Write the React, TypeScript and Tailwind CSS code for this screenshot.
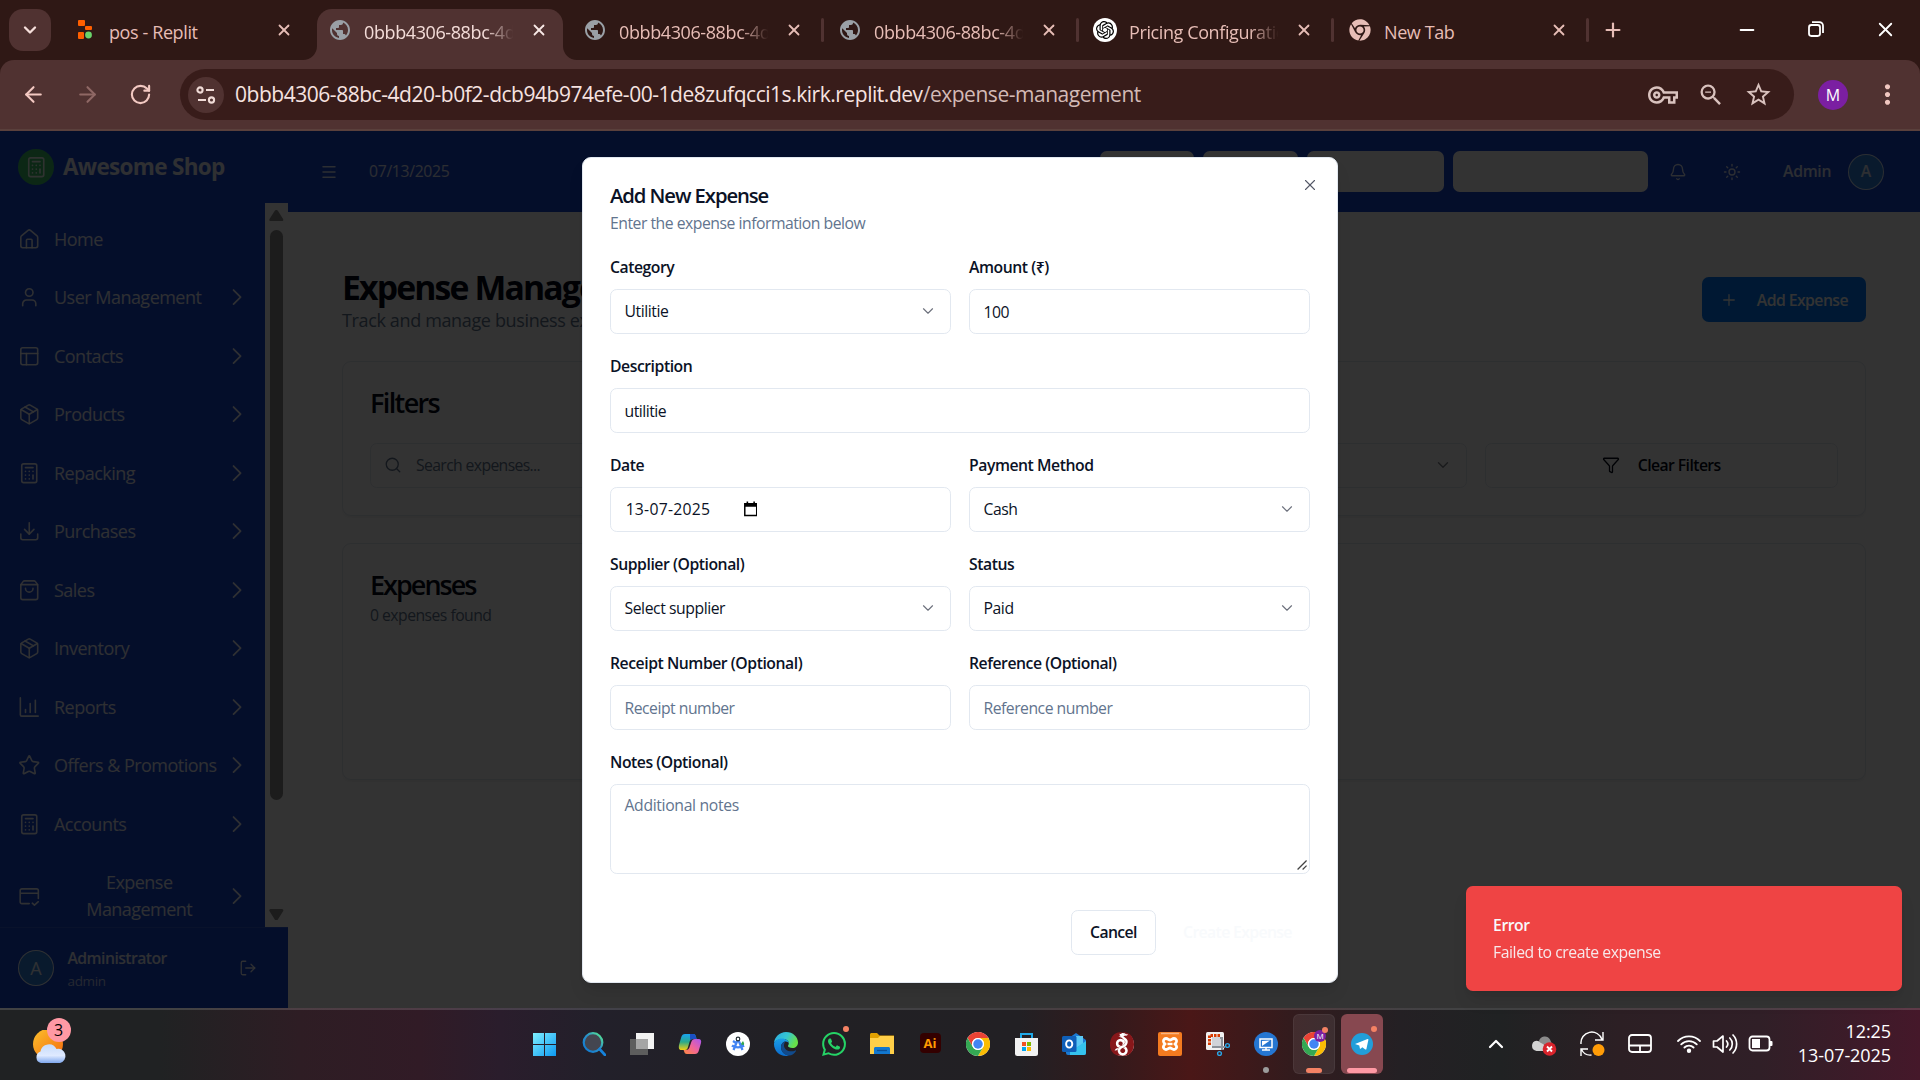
import type { ReactNode } from "react";
import {
  ArrowLeft, ArrowRight, Bell, Calculator, ChevronDown, ChevronRight, ChevronUp,
  Download, Filter, House, LogOut, Menu, Minus, Package, Plus, PanelsTopLeft, RotateCw,
  Search, ShoppingBag, Star, Sun, User, X,
} from "lucide-react";
import { MdMoreVert, MdOutlineVpnKey, MdPublic, MdStarBorder, MdZoomOut } from "react-icons/md";
import { FaChrome } from "react-icons/fa";
import { SiOpenai, SiWhatsapp, SiWireguard } from "react-icons/si";

/* ---------- Browser chrome ---------- */

function ReplitIcon() {
  return (
    <svg width="16" height="20" viewBox="0 0 16 20">
      <rect x="1" y="0" width="7" height="6" rx="1" fill="#ff5f00" />
      <rect x="8" y="6" width="7" height="4" rx="1" fill="#ff5f00" />
      <rect x="1" y="12" width="6" height="7" rx="1" fill="#ff5f00" />
      <circle cx="11.5" cy="15" r="3.4" fill="#6bd46b" />
    </svg>
  );
}

type TabProps = { icon: ReactNode; title: string; active?: boolean; fade?: boolean; line?: boolean };

function Tab({ icon, title, active, fade, line }: TabProps) {
  return (
    <div className={active ? "relative mr-[9px] flex h-[51px] w-[246px] shrink-0 items-center rounded-t-[15px] bg-[#503231] pb-[9px]" : "relative flex h-[51px] w-[255px] shrink-0 items-center pb-[9px]"}>
      {active && (
        <>
          <svg className="absolute bottom-0 -left-[14px]" width="14" height="14"><path d="M14 0V14H0A14 14 0 0 0 14 0Z" fill="#503231" /></svg>
          <svg className="absolute -right-[14px] bottom-0" width="14" height="14"><path d="M0 0V14H14A14 14 0 0 1 0 0Z" fill="#503231" /></svg>
        </>
      )}
      <span className="ml-[11px] flex w-6 justify-center">{icon}</span>
      <span
        className={
          (active ? "text-[#f3dcd8] " : "text-[#e7bdb6] ") +
          (fade ? "[mask-image:linear-gradient(to_right,black_80%,transparent_99%)] " : "") +
          "ml-3 w-[151px] overflow-hidden pt-[3px] text-[18px] leading-6 tracking-[-0.022em] whitespace-nowrap"
        }
      >
        {title}
      </span>
      <X className={active ? "ml-[15px] text-[#f8e9e6]" : "ml-[15px] text-[#e7bdb6]"} size={18} strokeWidth={2.4} />
      {line && <span className="absolute top-[9px] right-[3px] h-6 w-[3px] rounded bg-[#503231]" />}
    </div>
  );
}

function BrowserBar() {
  const globe = <MdPublic size={26} className="text-[#9aa0a6]" />;
  return (
    <header className="flex h-[131px] shrink-0 flex-col bg-[#2f1815]">
      <div className="flex h-[60px] items-end">
        <div className="mr-[11px] mb-[9px] ml-[9px] flex size-[42px] shrink-0 items-center justify-center rounded-[14px] bg-[#503231]">
          <ChevronDown size={20} strokeWidth={2.8} className="text-[#f6dfdb]" />
        </div>
        <Tab icon={<ReplitIcon />} title="pos - Replit" />
        <Tab icon={globe} title="0bbb4306-88bc-4d20" active fade />
        <Tab icon={globe} title="0bbb4306-88bc-4d20" fade line />
        <Tab icon={globe} title="0bbb4306-88bc-4d20" fade line />
        <Tab
          icon={<span className="flex size-6 items-center justify-center rounded-full bg-white text-black"><SiOpenai size={18} /></span>}
          title="Pricing Configuration" fade line
        />
        <Tab icon={<FaChrome size={22} className="text-[#e7bdb6]" />} title="New Tab" line />
        <Plus size={22} strokeWidth={2.4} className="mb-[19px] ml-[10px] text-[#e7bdb6]" />
        <div className="mr-[23px] mb-[19px] ml-auto flex items-center gap-[47px] text-white">
          <Minus size={22} strokeWidth={2} />
          <svg width="22" height="22" viewBox="0 0 22 22" fill="none" stroke="currentColor" strokeWidth="1.8">
            <rect x="4" y="6" width="11" height="11" rx="2.4" />
            <path d="M7 3.2h7.5a3.5 3.5 0 0 1 3.5 3.5V14" />
          </svg>
          <X size={23} strokeWidth={1.9} />
        </div>
      </div>
      <div className="flex h-[71px] items-center rounded-t-[14px] border-b-2 border-[#5a403c] bg-[#503231]">
        <div className="ml-[21px] flex items-center gap-[29px] text-[#f3c9c2]">
          <ArrowLeft size={25} strokeWidth={2} />
          <ArrowRight size={25} strokeWidth={2} className="text-[#8f6865]" />
          <RotateCw size={23} strokeWidth={2.2} />
        </div>
        <div className="ml-[28px] flex h-[51px] w-[1614px] items-center rounded-full bg-[#381c1a]">
          <span className="ml-2 flex size-9 items-center justify-center rounded-full bg-[#503231]">
            <svg width="20" height="20" viewBox="0 0 20 20" fill="none" stroke="#f0dbd7" strokeWidth="2.1">
              <circle cx="4" cy="5" r="2.6" /><path d="M10 5h8M2 15h8" /><circle cx="15.5" cy="15" r="2.6" />
            </svg>
          </span>
          <p className="ml-[11px] pt-px text-[21px] tracking-[-0.0222em] whitespace-nowrap text-[#f6e3e0]">
            0bbb4306-88bc-4d20-b0f2-dcb94b974efe-00-1de8zufqcci1s.kirk.replit.dev
            <span className="text-[#d3bab6]">/expense-management</span>
          </p>
          <div className="mr-[21px] ml-auto flex items-center gap-[19px] text-[#d9c2be]">
            <MdOutlineVpnKey size={30} />
            <MdZoomOut size={28} />
            <MdStarBorder size={29} />
          </div>
        </div>
        <span className="ml-6 flex size-[30px] items-center justify-center rounded-full bg-[#7b1fa2] text-base text-white">M</span>
        <MdMoreVert size={31} className="ml-6 text-[#f0c7c0]" />
      </div>
    </header>
  );
}

/* ---------- Application page ---------- */

function ReportIcon() {
  return (
    <svg width="20" height="20" viewBox="0 0 24 24" fill="none" stroke="currentColor" strokeWidth="1.7" strokeLinecap="round" strokeLinejoin="round">
      <path d="M2.5 2v18a1.500 1.500 0 0 0 1.500 1.500h17.500M8 17.500v-3M13 17.500V8M18.500 17.500V4.500" />
    </svg>
  );
}

function CardCheckIcon() {
  return (
    <svg width="20" height="20" viewBox="-0.500 -1 26 26" fill="none" stroke="currentColor" strokeWidth="1.800" strokeLinecap="round" strokeLinejoin="round">
      <path d="M12.500 20.500H4a2 2 0 0 1-2-2v-13a2 2 0 0 1 2-2h17a2 2 0 0 1 2 2v9M2 8.500h21M16 20l2.500 2.300 4.500-4" />
    </svg>
  );
}

const navItems: { label: string; icon: ReactNode; plain?: boolean }[] = [
  { label: "Home", icon: <House size={20} strokeWidth={1.7} />, plain: true },
  { label: "User Management", icon: <User size={20} strokeWidth={1.7} /> },
  { label: "Contacts", icon: <PanelsTopLeft size={20} strokeWidth={1.7} /> },
  { label: "Products", icon: <Package size={20} strokeWidth={1.7} /> },
  { label: "Repacking", icon: <Calculator size={20} strokeWidth={1.7} /> },
  { label: "Purchases", icon: <Download size={20} strokeWidth={1.7} /> },
  { label: "Sales", icon: <ShoppingBag size={20} strokeWidth={1.7} /> },
  { label: "Inventory", icon: <Package size={20} strokeWidth={1.7} /> },
  { label: "Reports", icon: <ReportIcon /> },
  { label: "Offers & Promotions", icon: <Star size={20} strokeWidth={1.7} /> },
  { label: "Accounts", icon: <Calculator size={20} strokeWidth={1.7} /> },
  { label: "Expense Management", icon: <CardCheckIcon /> },
];

function Sidebar() {
  return (
    <aside className="flex w-64 shrink-0 flex-col bg-[#1646d2] text-white/90">
      <div className="flex h-16 shrink-0 items-center px-4 pb-3">
        <span className="mt-3 flex size-8 items-center justify-center rounded-full bg-[#3fc46c]">
          <Calculator size={20} strokeWidth={1.7} />
        </span>
        <span className="mt-3 ml-2 text-xl font-bold tracking-[-0.03em]">Awesome Shop</span>
      </div>
      <div className="flex min-h-0 flex-1">
        <nav className="flex flex-1 flex-col gap-1 overflow-hidden pt-2">
          {navItems.map(({ label, icon, plain }) => (
            <div key={label} className="flex shrink-0 items-center gap-3 py-3 pr-[18px] pl-4">
              <span className="shrink-0">{icon}</span>
              <span className={label === "Expense Management" ? "flex-1 text-center leading-6 tracking-[-0.03em]" : "flex-1 leading-6 tracking-[-0.029em] whitespace-nowrap"}>{label}</span>
              {!plain && <ChevronRight size={25} strokeWidth={1.5} className="-my-1 -mr-[5.500px] -ml-[13.500px] shrink-0" />}
            </div>
          ))}
        </nav>
        <div className="flex w-[20.5px] flex-col items-center justify-between bg-[#fcfcfc] py-1.5">
          <svg width="13" height="10" viewBox="0 0 13 10" fill="#8b8b8b"><path d="M5 .8a1.800 1.800 0 0 1 3 0L12.500 8a1.300 1.300 0 0 1-1 2h-10a1.300 1.300 0 0 1-1-2Z" /></svg>
          <span className="mt-2 mb-auto h-[507px] w-[11.500px] rounded-full bg-[#8b8b8b]" />
          <svg width="13" height="10" viewBox="0 0 13 10" fill="#8b8b8b"><path d="M5 9.200a1.800 1.800 0 0 0 3 0L12.500 2a1.300 1.300 0 0 0-1-2h-10a1.300 1.300 0 0 0-1 2Z" /></svg>
        </div>
      </div>
      <div className="flex h-[72px] shrink-0 items-center border-t border-white/10 px-4">
        <span className="flex size-8 items-center justify-center rounded-full border border-white/90 bg-[#2f80e0]">A</span>
        <span className="ml-3 flex flex-col pt-px">
          <span className="text-sm leading-5 font-semibold tracking-[-0.035em]">Administrator</span>
          <span className="pt-0.5 text-xs leading-4 tracking-[-0.025em] text-white/70">admin</span>
        </span>
        <LogOut size={16} strokeWidth={1.7} className="mr-3 ml-auto" />
      </div>
    </aside>
  );
}

function TopBar() {
  return (
    <div className="flex h-[72px] shrink-0 items-center bg-[#1646d2] px-8 text-white/85">
      <Menu size={16} strokeWidth={1.9} className="-ml-1" />
      <span className="ml-7 text-sm tracking-[-0.02em]">07/13/2025</span>
      <div className="ml-auto flex gap-2">
        <span className="h-9 w-[83.500px] rounded-md bg-white" />
        <span className="h-9 w-[85px] rounded-md bg-white" />
        <span className="h-9 w-[122px] rounded-md bg-white" />
        <span className="h-9 w-[173px] rounded-md bg-white" />
      </div>
      <Bell size={16} strokeWidth={1.800} className="ml-[19px]" />
      <Sun size={16} strokeWidth={1.800} className="ml-8" />
      <span className="ml-[37px] text-sm font-semibold tracking-[-0.02em]">Admin</span>
      <span className="ml-[15px] flex size-8 items-center justify-center rounded-full border border-white/80 bg-[#2f80e0] text-sm font-semibold">A</span>
    </div>
  );
}

function ExpensesPage() {
  return (
    <main className="flex flex-1 flex-col gap-6 bg-white p-12 text-[#020817]">
      <div className="flex items-center justify-between">
        <div>
          <h1 className="h-9 text-3xl leading-[39px] font-bold tracking-[-0.055em]">Expense Management</h1>
          <p className="leading-6 tracking-[-0.02em] text-slate-500">Track and manage business expenses</p>
        </div>
        <button className="flex h-10 items-center rounded-md bg-[#007bff] px-4 text-sm font-semibold tracking-[-0.035em] text-white">
          <Plus size={16} strokeWidth={1.700} className="mr-[17px]" />
          Add Expense
        </button>
      </div>
      <section className="flex flex-col gap-6 rounded-lg border border-slate-200 p-6 shadow-xs">
        <h3 className="text-2xl leading-none font-semibold tracking-[-0.06em]">Filters</h3>
        <div className="grid grid-cols-4 gap-4 text-sm">
          <div className="flex h-10 items-center gap-[12.500px] rounded-md border border-slate-200 px-[11.500px] text-slate-500">
            <Search size={16} strokeWidth={1.800} />
            <span className="tracking-[-0.04em]">Search expenses...</span>
          </div>
          <div className="h-10 rounded-md border border-slate-200" />
          <div className="flex h-10 items-center justify-end rounded-md border border-slate-200 px-3">
            <ChevronDown size={16} strokeWidth={1.800} className="opacity-50" />
          </div>
          <button className="flex h-10 items-center justify-center rounded-md border border-slate-200 font-semibold tracking-[-0.037em]">
            <Filter size={16} strokeWidth={1.700} className="mr-4" />
            Clear Filters
          </button>
        </div>
      </section>
      <section className="flex h-[211px] flex-col gap-1.5 rounded-lg border border-slate-200 p-6 shadow-xs">
        <h3 className="text-2xl leading-none font-semibold tracking-[-0.073em]">Expenses</h3>
        <p className="text-sm leading-5 tracking-[-0.034em] text-slate-500">0 expenses found</p>
      </section>
    </main>
  );
}

function Field({ label, children, wide }: { label: string; children: ReactNode; wide?: boolean }) {
  return (
    <div className={wide ? "col-span-2 flex flex-col gap-2" : "flex flex-col gap-2"}>
      <label className="h-6 text-sm leading-[26px] font-semibold tracking-[-0.029em]">{label}</label>
      {children}
    </div>
  );
}

function SelectBox({ value }: { value: string }) {
  return (
    <div className="flex h-10 items-center justify-between rounded-md border border-slate-200 px-3 pb-px text-sm tracking-[-0.028em]">
      {value}
      <ChevronDown size={16} strokeWidth={1.500} className="opacity-60" />
    </div>
  );
}

function InputBox({ value, muted }: { value: string; muted?: boolean }) {
  return (
    <div className={(muted ? "text-slate-500 " : "") + "flex h-10 items-center rounded-md border border-slate-200 px-3 pt-px text-sm tracking-[-0.032em]"}>
      {value}
    </div>
  );
}

function ExpenseDialog() {
  return (
    <div className="relative mt-px flex w-[672px] flex-col gap-4 rounded-lg border border-slate-200 bg-white p-6 text-[#0b1226] shadow-lg">
      <X size={16} strokeWidth={1.500} className="absolute top-4 right-4 opacity-70" />
      <div className="flex flex-col gap-1.5">
        <h2 className="text-lg leading-none font-semibold tracking-[-0.053em]">Add New Expense</h2>
        <p className="text-sm leading-5 tracking-[-0.031em] text-slate-500">Enter the expense information below</p>
      </div>
      <div className="grid grid-cols-2 gap-4">
        <Field label="Category"><SelectBox value="Utilitie" /></Field>
        <Field label="Amount (₹)"><InputBox value="100" /></Field>
        <Field label="Description" wide><InputBox value="utilitie" /></Field>
        <Field label="Date">
          <div className="flex h-10 items-center rounded-md border border-slate-200 px-3 pb-px text-sm">
            <span className="w-[106px] pl-px tracking-[0.015em] whitespace-nowrap">13-07-2025</span>
            <svg width="12" height="14" viewBox="0 0 12 14">
              <path d="M.7 2.500h10.600v10.400H.7Z" fill="none" stroke="#000" strokeWidth="1.300" />
              <path d="M.7 2h10.600v3H.7ZM2.300.4h1.400V3H2.300ZM8.300.4h1.400V3H8.300Z" fill="#000" />
            </svg>
          </div>
        </Field>
        <Field label="Payment Method"><SelectBox value="Cash" /></Field>
        <Field label="Supplier (Optional)"><SelectBox value="Select supplier" /></Field>
        <Field label="Status"><SelectBox value="Paid" /></Field>
        <Field label="Receipt Number (Optional)"><InputBox value="Receipt number" muted /></Field>
        <Field label="Reference (Optional)"><InputBox value="Reference number" muted /></Field>
        <Field label="Notes (Optional)" wide>
          <div className="relative h-20 rounded-md border border-slate-200 px-3 py-2 text-sm tracking-[-0.022em] text-slate-500">
            Additional notes
            <svg className="absolute right-0.5 bottom-0.5 text-[#444]" width="9" height="9" viewBox="0 0 9 9" stroke="currentColor" strokeWidth="1.100"><path d="M.5 8.500l8-8M5 8.500l3.500-3.500" /></svg>
          </div>
        </Field>
      </div>
      <div className="mt-4 flex justify-end gap-2 text-sm font-semibold">
        <button className="h-10 w-[75.500px] rounded-md border border-slate-200 tracking-[-0.04em]">Cancel</button>
        <button className="h-10 w-[129px] rounded-md tracking-[-0.04em] text-slate-50">Create Expense</button>
      </div>
    </div>
  );
}

function AppPage() {
  return (
    <div className="relative flex flex-1 [zoom:1.125]">
      <Sidebar />
      <div className="flex min-w-0 flex-1 flex-col">
        <TopBar />
        <ExpensesPage />
      </div>
      <div className="absolute inset-0 flex items-center justify-center bg-black/80">
        <ExpenseDialog />
      </div>
      <div className="absolute right-4 bottom-[15.500px] flex h-[93px] w-[387.500px] flex-col justify-center rounded-md bg-[#ef4444] pt-px pl-6 text-sm text-slate-50 shadow-lg">
        <p className="leading-5 font-semibold tracking-[-0.03em]">Error</p>
        <p className="mt-1 leading-5 tracking-[-0.028em] opacity-90">Failed to create expense</p>
      </div>
    </div>
  );
}

/* ---------- Taskbar ---------- */

const ChromeLogo = () => (
  <svg width="24" height="24" viewBox="0 0 48 48">
    <circle cx="24" cy="24" r="24" fill="#fff" />
    <path d="M24 12h20.800A24 24 0 0 0 3.200 12L13.600 30A12 12 0 0 1 24 12Z" fill="#ea4335" />
    <path d="M34.400 30 24 48A24 24 0 0 0 44.800 12H24a12 12 0 0 1 10.400 18Z" fill="#fbbc04" />
    <path d="M13.600 30 3.200 12A24 24 0 0 0 24 48l10.400-18a12 12 0 0 1-20.800 0Z" fill="#34a853" />
    <circle cx="24" cy="24" r="12" fill="#fff" /><circle cx="24" cy="24" r="9.500" fill="#4285f4" />
  </svg>
);

const taskIcons: ReactNode[] = [
  <svg width="23" height="23" viewBox="0 0 23 23" className="mr-[3px]">
    <defs><linearGradient id="win" x1="0" y1="0" x2="1" y2="1"><stop stopColor="#7ff0ff" /><stop offset="1" stopColor="#0d99f2" /></linearGradient></defs>
    <path d="M0 0h11v11H0ZM12 0h11v11H12ZM0 12h11v11H0ZM12 12h11v11H12Z" fill="url(#win)" />
  </svg>,
  <svg width="24" height="24" viewBox="0 0 24 24" fill="none">
    <defs><linearGradient id="srch" x1="1" y1="0" x2="0" y2="1"><stop stopColor="#5cf08a" /><stop offset=".45" stopColor="#2b93c9" /><stop offset="1" stopColor="#0d76d2" /></linearGradient></defs>
    <circle cx="11" cy="10.500" r="9.300" fill="#444650" stroke="url(#srch)" strokeWidth="2.200" />
    <path d="m17.500 17 5.500 6" stroke="#1683dc" strokeWidth="2.600" strokeLinecap="round" />
  </svg>,
  <svg width="24" height="24" viewBox="0 0 24 24"><rect x="6" y="1" width="18" height="16" fill="#f3f3f3" /><rect y="7" width="18" height="16" fill="#5d5d5d" /><path d="M6 7h12v10H6Z" fill="#a5a5a5" /></svg>,
  <svg width="24" height="24" viewBox="0 0 24 24">
    <defs>
      <linearGradient id="cpa" x1="0" y1="0" x2="0" y2="1"><stop stopColor="#18a4f2" /><stop offset=".5" stopColor="#2ba98b" /><stop offset="1" stopColor="#f5d010" /></linearGradient>
      <linearGradient id="cpb" x1="1" y1="0" x2="0" y2="1"><stop stopColor="#a855f0" /><stop offset=".5" stopColor="#f0649c" /><stop offset="1" stopColor="#ff8a3c" /></linearGradient>
    </defs>
    <path d="M7 2h8c2 0 2.500 1 3 3l.6 2H15c-2 0-3 1-3.500 3l-1.300 4.500C9.500 17 9 18 7 18H3.500C1 18 .5 16 1 13L3.300 5C4 3 5 2 7 2Z" fill="url(#cpa)" />
    <path d="M12 2h3c2 0 2.500 1 3 3l.6 2H15c-1.500 0-2.500.5-3 1.500Z" fill="#1a4fc4" />
    <path d="M17 22H9c-2 0-2.500-1-3-3l-.4-1H8c2 0 3-1 3.600-3l1.700-5c.6-2 1.700-3 3.700-3h3.500c2.500 0 3 2 2.500 4l-2.300 8C20 21 19 22 17 22Z" fill="url(#cpb)" />
  </svg>,
  <svg width="24" height="24" viewBox="0 0 24 24" fill="none"><circle cx="12" cy="12" r="12" fill="#fff" /><path d="M17 9a5 5 0 0 1 1 5l-4-1Z" fill="#34a853" /><path d="M12 7 7.500 18M12 7l4.500 11M6 13.500c3 2.500 9 2.500 12 0M7 9l3 2" stroke="#4285f4" strokeWidth="2.300" /><circle cx="12" cy="7" r="1.800" fill="#fff" stroke="#263238" strokeWidth="1.200" /></svg>,
  <svg width="24" height="24" viewBox="0 0 24 24">
    <defs>
      <linearGradient id="edg" x1="0" y1="0" x2="1" y2=".4"><stop stopColor="#2aa9e0" /><stop offset=".55" stopColor="#35c6d3" /><stop offset="1" stopColor="#67e049" /></linearGradient>
      <linearGradient id="edb" x1="0" y1="0" x2="0" y2="1"><stop stopColor="#1a9ee8" /><stop offset="1" stopColor="#0b6bcc" /></linearGradient>
    </defs>
    <path d="M0 11C.5 5 5.500 0 12 0c7 0 12 5 12 10.500 0 3.500-2.500 5.500-5.500 5.500-3 0-4.500-1.200-4.500-2 0-.6.800-1 .8-2.800C14.800 9 12.500 7 9 7 4.500 7 1 9 0 11Z" fill="url(#edg)" />
    <path d="M0 12c0-3 3.500-5.500 8-5.500 4 0 6.800 2.500 6.800 5-.3-1.200-1.500-2-3-2C9 9.500 7 12 7 15c0 4.500 3.500 8 8 8.500-1 .4-2 .5-3 .5C5 24 0 18.500 0 12Z" fill="url(#edb)" />
    <path d="M11.500 9.500C9 9.800 7 12 7 15c0 4.500 3.500 8.500 8 8.500 3 0 5.500-2 7-4.500.3-.6-.1-.8-.6-.6-5.400 2.400-11.400-.4-11.400-5 0-1.800.7-3.200 1.500-3.900Z" fill="#114a8b" />
  </svg>,
  <SiWhatsapp size={24} color="#25d366" />,
  <svg width="24" height="22" viewBox="0 0 24 22"><path d="M0 1.500C0 .7.700 0 1.500 0H7l2.500 2.500H24V8H0Z" fill="#e0a000" /><path d="M0 5h8l2-2h14v18H0Z" fill="#ffcf48" /><path d="M4 21v-5.500c0-1 .8-1.500 1.500-1.500h13c.7 0 1.500.5 1.500 1.500V21Z" fill="#1277cf" /><path d="M7 17.500h10" stroke="#0b4f96" strokeWidth="1.300" /></svg>,
  <span className="mb-0.5 flex h-5 w-[21px] items-center justify-center rounded bg-[#330000] text-[13px] leading-none font-bold text-[#ff9a00]">Ai</span>,
  <ChromeLogo />,
  <svg width="23" height="23" viewBox="0 0 23 23"><path d="M6 6V1h11v5" fill="none" stroke="#1fa9e8" strokeWidth="2" /><path d="M0 5h23v15.500a2.500 2.500 0 0 1-2.500 2.500h-18A2.500 2.500 0 0 1 0 20.500Z" fill="#f2f2f2" /><path d="M7 9h4v4H7Z" fill="#f25022" /><path d="M12 9h4v4h-4Z" fill="#7fba00" /><path d="M7 14h4v4H7Z" fill="#00a4ef" /><path d="M12 14h4v4h-4Z" fill="#ffb900" /></svg>,
  <svg width="24" height="22" viewBox="0 0 24 22"><path d="M4 7 14 0l10 7v13a2 2 0 0 1-2 2H6a2 2 0 0 1-2-2Z" fill="#1b7bd4" /><path d="M14 3h7v8l-7 4Z" fill="#5bc8f5" /><path d="m24 8-16 11v3h14a2 2 0 0 0 2-2Z" fill="#35c3ee" /><rect y="3" width="14.500" height="16" rx="1.500" fill="#0f5fb8" /><ellipse cx="7.200" cy="11" rx="3.100" ry="3.600" fill="none" stroke="#fff" strokeWidth="1.900" /></svg>,
  <span className="flex size-[23px] items-center justify-center rounded-full bg-white text-[#88171a]"><SiWireguard size={24} className="shrink-0" /></span>,
  <svg width="24" height="24" viewBox="0 0 24 24" fill="none"><rect width="24" height="24" rx="2" fill="#f47b20" /><path d="M3 1.500h18" stroke="#f9b481" strokeWidth="1.500" /><path d="M8 6.500a2.600 2.600 0 0 0-2.200 4L7 12l-1.200 1.500a2.600 2.600 0 0 0 2.200 4c2 0 2.500-1.500 4-1.500s2 1.500 4 1.500a2.600 2.600 0 0 0 2.200-4L17 12l1.200-1.500a2.600 2.600 0 0 0-2.200-4c-2 0-2.500 1.500-4 1.500s-2-1.500-4-1.500Z" stroke="#fff" strokeWidth="2.800" /><path d="M9.500 12h5" stroke="#fff" strokeWidth="2.400" /></svg>,
  <svg width="24" height="24" viewBox="0 0 24 24"><rect width="18" height="18" rx="1.500" fill="#f1f1f1" /><path d="M3.500 13V3.500H14" fill="none" stroke="#d83b01" strokeWidth="3" strokeDasharray="2.500 1" /><path d="M6 5h10v10H6Z" fill="#d0d3d8" /><path d="M14 6h2v12M6 15h13" stroke="#8b9199" strokeWidth="2" fill="none" /><circle cx="21.500" cy="13.500" r="1.900" fill="none" stroke="#28a8ea" strokeWidth="1.400" /><circle cx="13.500" cy="21.500" r="1.900" fill="none" stroke="#28a8ea" strokeWidth="1.400" /></svg>,
  <svg width="24" height="24" viewBox="0 0 24 24"><circle cx="12" cy="12" r="12" fill="#2576d2" /><rect x="6" y="7" width="12" height="8.500" fill="none" stroke="#fff" strokeWidth="1.500" /><path d="M8 14V9l8-.5Z" fill="#fff" /><path d="M12 15v2.500M8 18h8" stroke="#fff" strokeWidth="1.500" /></svg>,
  <span className="relative flex"><ChromeLogo /><span className="absolute -top-0.5 left-3 flex size-3 items-center justify-center rounded-full bg-[#7b1fa2] text-[8px] text-white">M</span></span>,
  <svg width="22" height="22" viewBox="0 0 22 22"><circle cx="11" cy="11" r="11" fill="#229ed9" /><path d="M4 11 16.500 6c.6-.2 1 .2.900.8l-2 9.200c-.1.600-.6.700-1.100.4l-3-2.200-1.600 1.500c-.4.300-.7.200-.8-.3l-.6-3Z" fill="#fff" /></svg>,
];

function Taskbar() {
  return (
    <footer className="flex h-[72px] shrink-0 items-center border-t-2 border-white/15 bg-[linear-gradient(90deg,#202223_0px,#202223_160px,#2e1d24_300px,#311b26_420px,#2a1d2c_500px,#22202a_600px,#212024_800px,#222024_1020px,#331a1c_1110px,#4a1717_1190px,#331b1d_1290px,#242024_1400px,#202223_1500px,#2c1f24_1620px,#301f27_1760px,#45182a_1920px)] pb-0.5">
      <div className="relative ml-[32px] h-12 w-10">
        <svg className="mt-2.5" width="36" height="36" viewBox="0 0 36 36">
          <defs>
            <linearGradient id="sun" x1="0" y1="0" x2="1" y2="1"><stop stopColor="#fbc02d" /><stop offset="1" stopColor="#f4690c" /></linearGradient>
            <linearGradient id="cld" x1="0" y1="0" x2="0" y2="1"><stop stopColor="#c6dbfa" /><stop offset=".6" stopColor="#dfeaff" /><stop offset="1" stopColor="#7fa8ee" /></linearGradient>
          </defs>
          <circle cx="16" cy="14" r="15" fill="url(#sun)" />
          <path d="M9 33a6 6 0 0 1-.5-11.500 8.500 8.500 0 0 1 16-2.500A7 7 0 0 1 28 33Z" fill="url(#cld)" />
        </svg>
        <span className="absolute -top-0.5 left-[14.500px] flex size-6 items-center justify-center rounded-full bg-[#ff99a4] text-base text-black">3</span>
      </div>
      <div className="ml-[450px] flex">
        {taskIcons.map((icon, i) => (
          <div key={i} className="flex h-[70px] w-12 items-center justify-center">
            <div
              className={
                (i === 16 ? "border border-white/5 bg-white/8 " : i === 17 ? "bg-[#874850] " : "") +
                "relative flex h-[60px] w-[42px] items-center justify-center rounded-md"
              }
            >
              {icon}
              {(i === 6 || i > 15) && <span className="absolute top-3 right-1.5 size-1.5 rounded-full bg-[#f48264]" />}
              {i === 15 && <span className="absolute bottom-px size-1.5 rounded-full bg-[#9c9c9c]" />}
              {i === 16 && <span className="absolute bottom-0 h-[5px] w-4 rounded-full bg-[#f48264]" />}
              {i === 17 && <span className="absolute bottom-px h-[5px] w-[30px] rounded-full bg-[#ff99a4]" />}
            </div>
          </div>
        ))}
      </div>
      <div className="mr-[29px] ml-auto flex items-center text-white">
        <ChevronUp size={24} strokeWidth={2.200} />
        <svg width="26" height="24" viewBox="0 0 26 24" className="ml-[23px]">
          <path d="M8 9a6 6 0 0 1 11-1.500L21 12 9 13Z" fill="#8b8b8b" /><path d="M5.500 19a5.200 5.200 0 0 1 0-10.300c1.800 0 3 .8 4 2L16 14v5Z" fill="#d2d2d2" />
          <circle cx="18.500" cy="17" r="6.800" fill="#d9242c" /><path d="m16 14.500 5 5m0-5-5 5" stroke="#fff" strokeWidth="1.900" />
        </svg>
        <svg width="26" height="26" viewBox="0 0 26 26" className="ml-[22px]" fill="none" stroke="currentColor" strokeWidth="1.400">
          <path d="M2 13A10.800 10.800 0 0 1 23 8.500M24 1v8h-8M2 25v-7h7M2.500 18.500c2 4 6 6 10 5.500" />
          <circle cx="19.500" cy="19" r="6" fill="#ff9c07" stroke="none" />
        </svg>
        <svg width="24" height="20" viewBox="0 0 24 20" className="ml-[23px]" fill="none" stroke="currentColor" strokeWidth="1.800"><rect x="1" y="1" width="22" height="17" rx="3" /><path d="M1 11.500h22M12 11.500V18" /></svg>
        <svg width="26" height="20" viewBox="0 0 26 20" className="ml-[24px]" fill="none" stroke="currentColor" strokeWidth="1.800" strokeLinecap="round">
          <path d="M2 7a15.500 15.500 0 0 1 22 0M5.200 10.300a11 11 0 0 1 15.600 0M8.400 13.500a6.500 6.500 0 0 1 9.200 0" /><circle cx="13" cy="16.800" r="1.300" fill="currentColor" />
        </svg>
        <svg width="26" height="22" viewBox="0 0 26 22" className="ml-[10px]" fill="none" stroke="currentColor" strokeWidth="1.700" strokeLinecap="round" strokeLinejoin="round">
          <path d="M1.500 8v6h3.500l6 5V3L5 8ZM14.500 8a4.500 4.500 0 0 1 0 6M17.800 5a8.500 8.500 0 0 1 0 12M21 2a13 13 0 0 1 0 18" />
        </svg>
        <svg width="26" height="18" viewBox="0 0 26 18" className="ml-[10px]"><rect x="1.500" y="1.500" width="20" height="14" rx="3" fill="none" stroke="currentColor" strokeWidth="1.800" /><rect x="4" y="4" width="8" height="9" fill="currentColor" /><path d="M22 6h1.500a1 1 0 0 1 1 1v3a1 1 0 0 1-1 1H22Z" fill="currentColor" /></svg>
        <div className="mb-0.5 ml-[22px] w-[95px] text-right text-[18px] leading-6 tracking-[-0.004em] whitespace-nowrap">
          <p>12:25</p>
          <p>13-07-2025</p>
        </div>
      </div>
    </footer>
  );
}

export default function App() {
  return (
    <div className="flex h-[1080px] w-[1920px] flex-col overflow-hidden font-['Open_Sans','Noto_Sans',sans-serif]">
      <BrowserBar />
      <div className="flex h-[877px] shrink-0">
        <AppPage />
      </div>
      <Taskbar />
    </div>
  );
}
